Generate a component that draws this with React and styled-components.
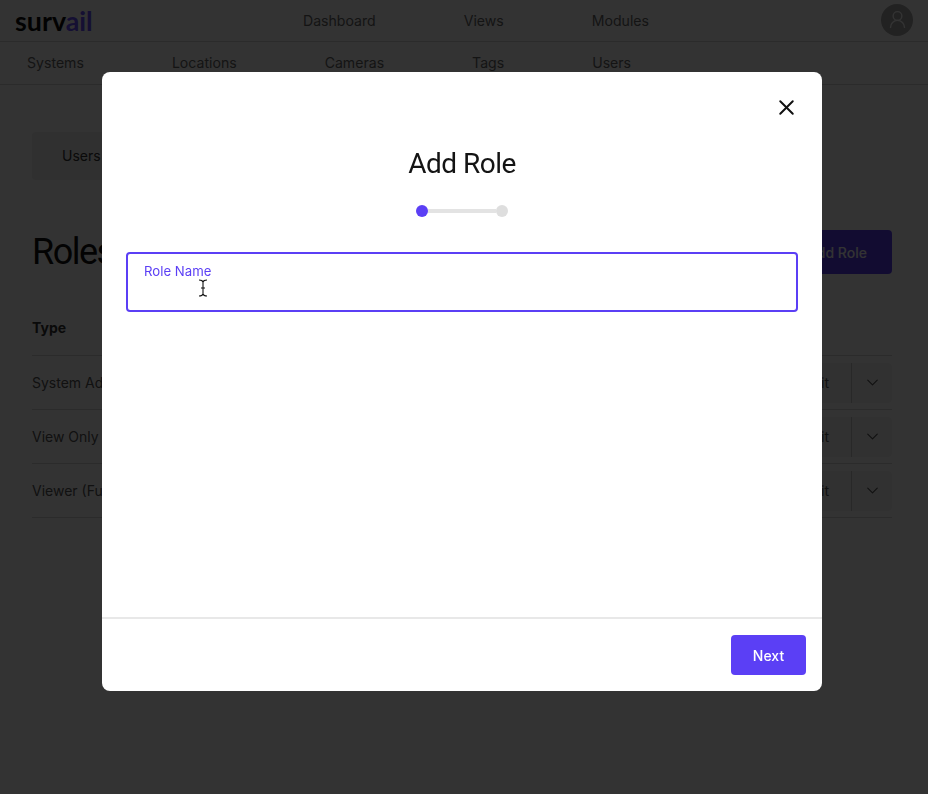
import React from "react";
import styled, { createGlobalStyle } from "styled-components";
import { ChevronDown, UserRound, X } from "lucide-react";

const roles = ["System Admin", "View Only", "Viewer (Full)"];
const mainLinks = ["Dashboard", "Views", "Modules"];
const subLinks = ["Systems", "Locations", "Cameras", "Tags", "Users"];

const App = () => {
  return (
    <>
      <GlobalStyle />
      <Page>
        <TopBar>
          <Logo>
            surv<LogoAccent>ail</LogoAccent>
          </Logo>
          <NavLinks>
            {mainLinks.map((link) => (
              <NavLink key={link}>{link}</NavLink>
            ))}
          </NavLinks>
          <Avatar>
            <UserRound size={21} strokeWidth={1.6} />
          </Avatar>
        </TopBar>
        <SubBar>
          <NavLinks>
            {subLinks.map((link) => (
              <NavLink key={link}>{link}</NavLink>
            ))}
          </NavLinks>
        </SubBar>
        <Content>
          <Tabs>
            <Tab>Users</Tab>
            <Tab>Roles</Tab>
          </Tabs>
          <TitleRow>
            <PageTitle>Roles</PageTitle>
            <AddButton>Add Role</AddButton>
          </TitleRow>
          <TableHead>Type</TableHead>
          {roles.map((role) => (
            <Row key={role}>
              <span>{role}</span>
              <RowActions>
                <EditLabel>Edit</EditLabel>
                <ChevronCell>
                  <ChevronDown size={19} strokeWidth={1.5} />
                </ChevronCell>
              </RowActions>
            </Row>
          ))}
        </Content>
      </Page>
      <Overlay>
        <Modal>
          <CloseRow>
            <CloseButton aria-label="Close">
              <X size={25} strokeWidth={1.9} />
            </CloseButton>
          </CloseRow>
          <ModalTitle>Add Role</ModalTitle>
          <Stepper>
            <StepDot $active />
            <StepLine />
            <StepDot />
          </Stepper>
          <FieldWrap>
            <Field>
              <FieldLabel>Role Name</FieldLabel>
              <FieldInput type="text" />
            </Field>
            <TextCursor viewBox="0 0 10 18" aria-hidden="true">
              <path
                d="M1 1c2 0 3.500.5 4 2 .5-1.500 2-2 4-2M5 3v12M3 9h4M1 17c2 0 3.500-.5 4-2 .5 1.500 2 2 4 2"
                fill="none"
                stroke="#111"
                strokeWidth="1.1"
              />
            </TextCursor>
          </FieldWrap>
          <ModalBody />
          <ModalFooter>
            <NextButton>Next</NextButton>
          </ModalFooter>
        </Modal>
      </Overlay>
    </>
  );
};

export default App;

const GlobalStyle = createGlobalStyle`
  * {
    box-sizing: border-box;
  }

  html,
  body {
    margin: 0;
    height: 100%;
    overflow: hidden;
    background-color: #fff;
    font-family: "Inter", "Liberation Sans", sans-serif;
  }
`;

const Page = styled.div`
  height: 794px;
  color: #111;
`;

const TopBar = styled.header`
  height: 42px;
  display: flex;
  align-items: center;
  padding: 0 15px;
  border-bottom: 1px solid #d8d8d8;
`;

const Logo = styled.div`
  width: 288px;
  font-family: "Lato", sans-serif;
  font-size: 26.800px;
  font-weight: 700;
  color: #0c0c0c;
`;

const LogoAccent = styled.span`
  color: #6a50ff;
`;

const NavLinks = styled.nav`
  display: flex;
  gap: 88px;
`;

const NavLink = styled.a`
  font-size: 14.100px;
  color: #666;
`;

const Avatar = styled.div`
  width: 32px;
  height: 32px;
  margin-left: auto;
  margin-top: -2px;
  border-radius: 50%;
  background-color: #aaa;
  color: #fff;
  display: flex;
  align-items: center;
  justify-content: center;
`;

const SubBar = styled.div`
  height: 43px;
  display: flex;
  align-items: center;
  padding: 0 0 2px 27px;
  border-bottom: 1px solid #d8d8d8;
`;

const Content = styled.main`
  padding: 47px 36px 0 32px;
`;

const Tabs = styled.div`
  width: 200px;
  height: 48px;
  display: flex;
  border-radius: 4px;
  background-color: #eee;
`;

const Tab = styled.div`
  padding: 0 0 0 30px;
  line-height: 48px;
  font-size: 14px;
  color: #333;
`;

const TitleRow = styled.div`
  margin-top: 50px;
  height: 44px;
  display: flex;
  align-items: center;
  justify-content: space-between;
`;

const PageTitle = styled.h1`
  margin: 0;
  font-family: "Roboto", sans-serif;
  font-size: 36px;
  font-weight: 400;
  letter-spacing: -1.500px;
`;

const AddButton = styled.button`
  width: 110px;
  height: 44px;
  border: none;
  border-radius: 4px;
  background-color: #5b3ff5;
  color: #fff;
  font-family: inherit;
  font-size: 14px;
  font-weight: 500;
`;

const TableHead = styled.div`
  height: 82px;
  padding-top: 45px;
  font-size: 14px;
  font-weight: 700;
  color: #333;
  border-bottom: 1px solid #d8d8d8;
`;

const Row = styled.div`
  height: 54px;
  display: flex;
  align-items: center;
  justify-content: space-between;
  font-size: 14px;
  color: #555;
  border-bottom: 1px solid #d8d8d8;
`;

const RowActions = styled.div`
  width: 118px;
  height: 40px;
  display: flex;
  align-items: center;
  border-radius: 4px;
  background-color: #f6f6f6;
`;

const EditLabel = styled.span`
  flex: 1;
  padding-right: 22px;
  text-align: right;
`;

const ChevronCell = styled.div`
  width: 41px;
  height: 100%;
  display: flex;
  align-items: center;
  justify-content: center;
  border-left: 1px solid #c9c9c9;
`;

const Overlay = styled.div`
  position: fixed;
  top: 0;
  left: 0;
  width: 100vw;
  height: 100vh;
  z-index: 10;
  padding: 72px 4px 0 0;
  display: flex;
  justify-content: center;
  align-items: flex-start;
  background-color: rgba(0, 0, 0, 0.8);
`;

const Modal = styled.section`
  width: 720px;
  height: 619px;
  display: flex;
  flex-direction: column;
  border-radius: 8px;
  background-color: #fff;
`;

const CloseRow = styled.div`
  display: flex;
  justify-content: flex-end;
  padding: 23px 23px 0 0;
`;

const CloseButton = styled.button`
  all: unset;
  width: 25px;
  height: 25px;
  display: flex;
  color: #111;
`;

const ModalTitle = styled.h2`
  margin: 26px 0 0;
  text-align: center;
  font-family: "Roboto", sans-serif;
  font-size: 28px;
  line-height: 36px;
  font-weight: 400;
  letter-spacing: -0.500px;
  color: #141414;
`;

const Stepper = styled.div`
  margin-top: 23px;
  display: flex;
  align-items: center;
  justify-content: center;
`;

const StepDot = styled.span`
  width: 12px;
  height: 12px;
  border-radius: 50%;
  background-color: ${({ $active }) => ($active ? "#5b3ff5" : "#dedede")};
`;

const StepLine = styled.span`
  width: 68px;
  height: 4px;
  background-color: #e3e3e3;
`;

const FieldWrap = styled.div`
  position: relative;
  margin: 35px 24px 0;
`;

const Field = styled.label`
  height: 60px;
  padding: 8px 16px 0;
  display: flex;
  flex-direction: column;
  border: 2px solid #5b3ff5;
  border-radius: 4px;
`;

const FieldLabel = styled.span`
  font-size: 13.200px;
  line-height: 18px;
  color: #5b3ff5;
`;

const FieldInput = styled.input`
  all: unset;
  flex: 1;
  font-size: 14px;
`;

const TextCursor = styled.svg`
  position: absolute;
  left: 72px;
  top: 27px;
  width: 10px;
  height: 18px;
`;

const ModalBody = styled.div`
  flex: 1;
`;

const ModalFooter = styled.footer`
  height: 74px;
  padding: 16px;
  display: flex;
  justify-content: flex-end;
  border-top: 2px solid #e8e8e8;
`;

const NextButton = styled.button`
  width: 75px;
  height: 40px;
  border: none;
  border-radius: 4px;
  background-color: #5b3ff5;
  color: #fff;
  font-family: inherit;
  font-size: 14px;
  font-weight: 500;
`;
